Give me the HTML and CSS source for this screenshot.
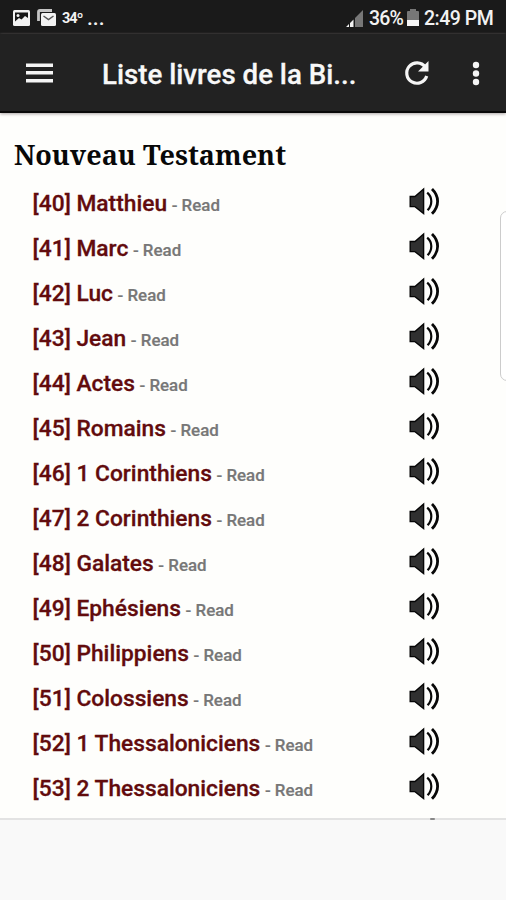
FILE: index.html
```html
<!DOCTYPE html>
<html lang="fr">
<head>
<meta charset="utf-8">
<title>Liste livres de la Bible</title>
<link rel="stylesheet" href="styles.css">
</head>
<body>
<svg class="defs" aria-hidden="true">
  <symbol id="sound" viewBox="0 0 32 30">
    <path d="M1.2 9.5H6L14.6 2V26.5L6 19.6H1.2Z" fill="#303030" stroke="#050505" stroke-width="1.4"/>
    <path d="M18.2 5.6Q22.3 9 22.3 14.2Q22.3 19.3 18.6 23.2" fill="none" stroke="#080808" stroke-width="2.2"/>
    <path d="M23 2Q28.6 7.500 28.6 14.2Q28.6 21 23 26.8" fill="none" stroke="#080808" stroke-width="2.8"/>
  </symbol>
</svg>
<div class="screen">
  <div class="status">
    <svg class="photo" width="20" height="18" viewBox="0 0 20 18"><rect x="1" y="1" width="17" height="16" rx="1.5" fill="#f2f2f2"/><path d="M3 3.500H16V9L13 7L9.500 10.500L7 9L3 12.500Z" fill="#171717"/><circle cx="6" cy="6.500" r="1.500" fill="#f2f2f2"/></svg>
    <svg class="mail" width="20" height="18" viewBox="0 0 20 18"><path d="M1.500 12V3Q1.500 1.500 3 1.500H15" fill="none" stroke="#c4c4c4" stroke-width="2.800"/><rect x="4" y="4" width="15" height="13" rx="1.500" fill="#f2f2f2"/><path d="M6.500 7L11.500 10.500L16.500 7" fill="none" stroke="#555" stroke-width="1.500"/></svg>
    <span class="temp">34º</span>
    <span class="dots">...</span>
    <svg class="signal" width="19" height="19" viewBox="0 0 19 19"><path d="M10 18V9L18 1V18Z" fill="#777"/><path d="M1 18L4 15V18ZM5 18V14L8.500 10.500V18Z" fill="#f2f2f2"/></svg>
    <span class="percent">36%</span>
    <svg class="battery" width="12" height="18" viewBox="0 0 12 18"><path d="M0 3Q0 2 1 2H3V0H9V2H11Q12 2 12 3V12H0Z" fill="#777"/><path d="M0 11H12V17H0Z" fill="#f5f5f5"/></svg>
    <span class="time">2:49 PM</span>
  </div>
  <header class="appbar">
    <svg class="menu" width="27" height="22" viewBox="0 0 27 22"><path d="M0 3.200H27M0 10.700H27M0 18.700H27" stroke="#f5f5f5" stroke-width="3.6"/></svg>
    <h1 class="title">Liste livres de la Bi...</h1>
    <svg class="refresh" width="28" height="28" viewBox="0 0 28 28"><path d="M22.200 8A10.200 10.200 0 1 0 23.700 17" fill="none" stroke="#f5f5f5" stroke-width="3.2"/><path d="M25.500 2V12.500H15Z" fill="#f5f5f5"/></svg>
    <svg class="more" width="8" height="26" viewBox="0 0 8 26"><circle cx="4" cy="4" r="3.200" fill="#f5f5f5"/><circle cx="4" cy="12.500" r="3.200" fill="#f5f5f5"/><circle cx="4" cy="21" r="3.200" fill="#f5f5f5"/></svg>
  </header>
  <main class="content">
    <h2 class="heading">Nouveau Testament</h2>
    <ul class="books">
      <li class="book"><span class="name">[40] Matthieu</span><span class="read">- Read</span><svg class="sound"><use href="#sound"/></svg></li>
      <li class="book"><span class="name">[41] Marc</span><span class="read">- Read</span><svg class="sound"><use href="#sound"/></svg></li>
      <li class="book"><span class="name">[42] Luc</span><span class="read">- Read</span><svg class="sound"><use href="#sound"/></svg></li>
      <li class="book"><span class="name">[43] Jean</span><span class="read">- Read</span><svg class="sound"><use href="#sound"/></svg></li>
      <li class="book"><span class="name">[44] Actes</span><span class="read">- Read</span><svg class="sound"><use href="#sound"/></svg></li>
      <li class="book"><span class="name">[45] Romains</span><span class="read">- Read</span><svg class="sound"><use href="#sound"/></svg></li>
      <li class="book"><span class="name">[46] 1 Corinthiens</span><span class="read">- Read</span><svg class="sound"><use href="#sound"/></svg></li>
      <li class="book"><span class="name">[47] 2 Corinthiens</span><span class="read">- Read</span><svg class="sound"><use href="#sound"/></svg></li>
      <li class="book"><span class="name">[48] Galates</span><span class="read">- Read</span><svg class="sound"><use href="#sound"/></svg></li>
      <li class="book"><span class="name">[49] Ephésiens</span><span class="read">- Read</span><svg class="sound"><use href="#sound"/></svg></li>
      <li class="book"><span class="name">[50] Philippiens</span><span class="read">- Read</span><svg class="sound"><use href="#sound"/></svg></li>
      <li class="book"><span class="name">[51] Colossiens</span><span class="read">- Read</span><svg class="sound"><use href="#sound"/></svg></li>
      <li class="book"><span class="name">[52] 1 Thessaloniciens</span><span class="read">- Read</span><svg class="sound"><use href="#sound"/></svg></li>
      <li class="book"><span class="name">[53] 2 Thessaloniciens</span><span class="read">- Read</span><svg class="sound"><use href="#sound"/></svg></li>
    </ul>
    <div class="edge-panel"></div>
  </main>
  <footer class="footer"><span class="peek"></span></footer>
</div>
</body>
</html>
```
FILE: styles.css
```css
* { box-sizing: border-box; }
body { margin: 0; font-family: Roboto, "Liberation Sans", sans-serif; }
.defs { display: none; }
svg { flex: none; display: block; }
.screen { width: 506px; height: 900px; overflow: hidden; display: flex; flex-direction: column; background: #fefefc; }
.status { height: 34px; flex: none; background: #1a1a1a; color: #f2f2f2; display: flex; align-items: center; padding: 2px 13px 0 12px; white-space: nowrap; }
.mail { margin-left: 5px; }
.temp { margin-left: 5px; width: 21px; font-size: 14.5px; font-weight: 700; letter-spacing: -1px; }
.dots { margin-left: 4px; font-size: 21px; font-weight: 500; line-height: 22px; }
.signal { margin-left: auto; }
.percent { margin-left: 5px; width: 34px; font-size: 19.5px; letter-spacing: -0.8px; font-weight: 500; }
.battery { margin-left: 4px; }
.time { margin-left: 5px; width: 69px; font-size: 19.5px; letter-spacing: -0.5px; font-weight: 500; }
.appbar { height: 79px; flex: none; background: #222; border-bottom: 2px solid #090909; box-shadow: 0 1px 3px #a9a2a2; display: flex; align-items: center; padding: 0 26px; position: relative; }
.title { margin: 4px 0 0 49px; width: 262px; font-size: 27.7px; line-height: 34px; font-weight: 500; color: #f8f8f8; -webkit-text-stroke: 0.3px #f8f8f8; white-space: nowrap; }
.refresh { margin-left: 39px; margin-top: 1px; }
.more { margin-left: 41px; margin-top: 3px; }
.content { height: 705px; flex: none; padding-top: 23px; position: relative; }
.heading { margin: 0 0 0 14px; height: 45px; line-height: 38px; font-family: "Noto Serif", "DejaVu Serif", serif; font-size: 27px; font-weight: 700; color: #080808; white-space: nowrap; }
.books { margin: 0; padding: 0 0 0 32.6px; list-style: none; }
.book { height: 45px; width: 408.4px; display: flex; align-items: baseline; line-height: 46px; white-space: nowrap; }
.name { font-size: 22.75px; font-weight: 500; color: #620b0d; -webkit-text-stroke: 0.3px #620b0d; }
.read { margin-left: 4.6px; font-size: 16.9px; font-weight: 500; color: #777; -webkit-text-stroke: 0.2px #777; }
.sound { width: 32px; height: 30px; margin-left: auto; align-self: flex-start; margin-top: 6px; }
.edge-panel { position: absolute; left: 500px; top: 98px; width: 20px; height: 170px; border: 1px solid #ccc; border-radius: 7px; background: #fff; }
.footer { flex: 1; background: #f9f9f9; border-top: 2px solid #e3e3e3; display: flex; }
.peek { width: 5px; height: 2px; margin: -2px 0 0 430px; background: #888; border-radius: 1px; }
```
